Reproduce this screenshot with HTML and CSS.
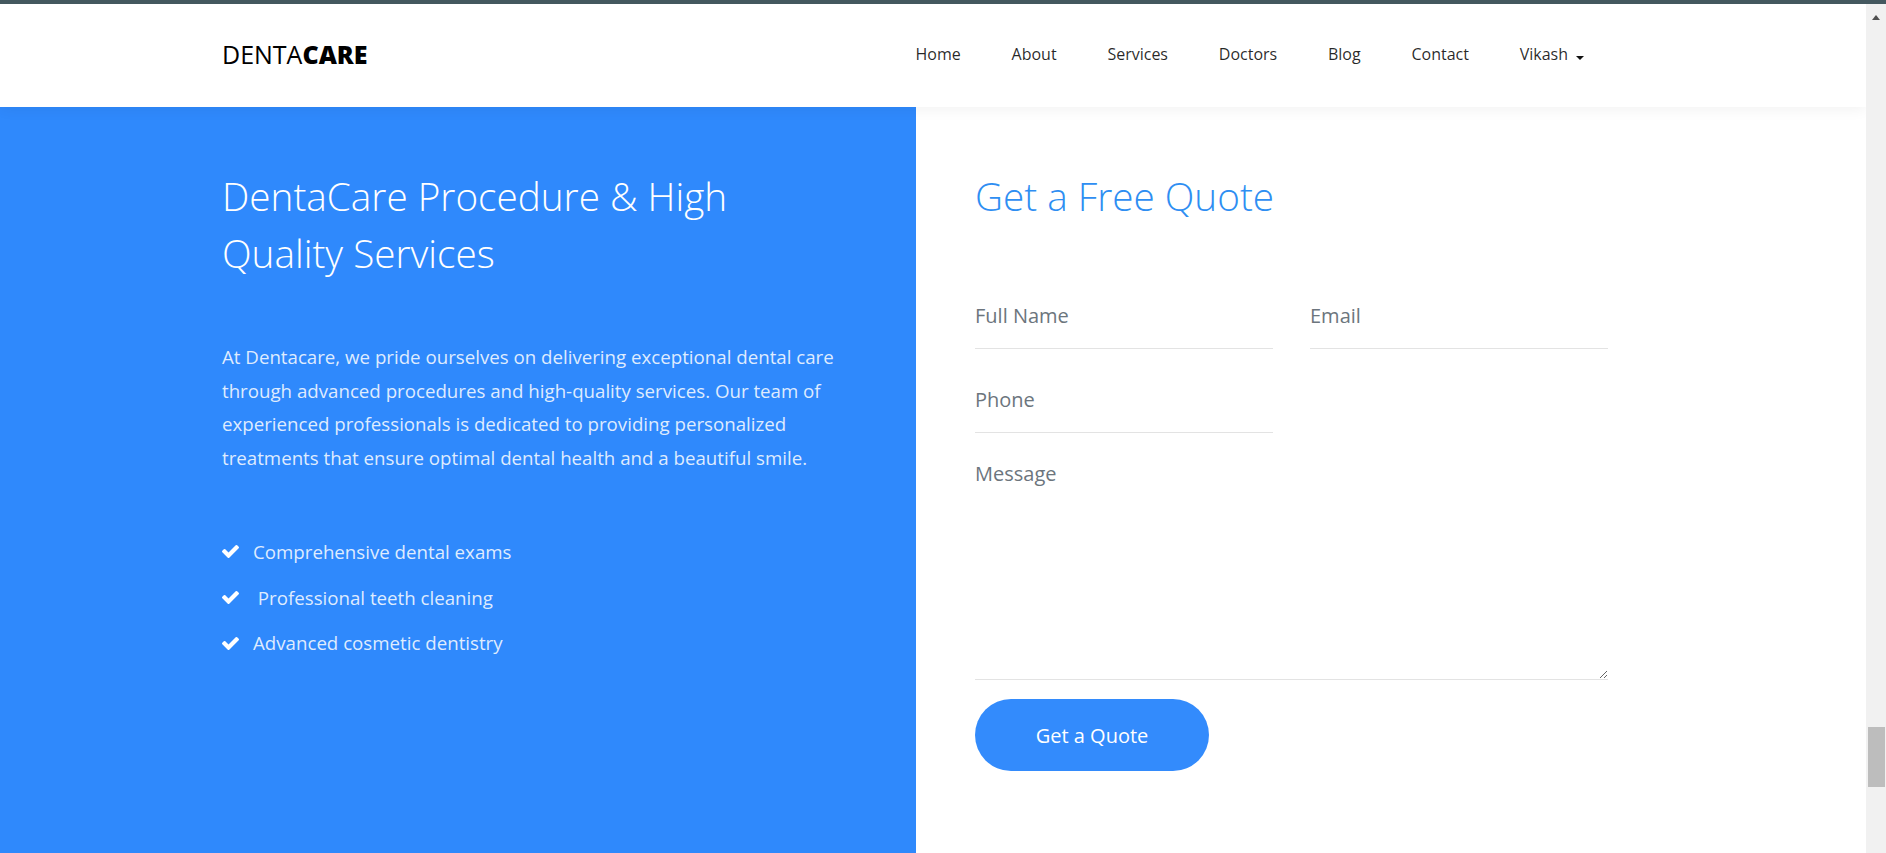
FILE: index.html
```html
<!DOCTYPE html>
<html lang="en">
<head>
<meta charset="utf-8">
<title>DentaCare</title>
<link rel="stylesheet" href="styles.css">
</head>
<body>
<div class="topbar"></div>
<div class="window">
  <div class="page">
    <header class="navbar">
      <div class="container nav-inner">
        <a class="brand" href="#">DENTA<b>CARE</b></a>
        <ul class="nav">
          <li><a href="#">Home</a></li>
          <li><a href="#">About</a></li>
          <li><a href="#">Services</a></li>
          <li><a href="#">Doctors</a></li>
          <li><a href="#">Blog</a></li>
          <li><a href="#">Contact</a></li>
          <li><a href="#" class="dropdown">Vikash<span class="caret"></span></a></li>
        </ul>
      </div>
    </header>
    <section class="quote">
      <div class="info">
        <h2 class="info-title">DentaCare Procedure &amp; High Quality Services</h2>
        <p class="info-text">At Dentacare, we pride ourselves on delivering exceptional dental care through advanced procedures and high-quality services. Our team of experienced professionals is dedicated to providing personalized treatments that ensure optimal dental health and a beautiful smile.</p>
        <ul class="checks">
          <li><svg class="check" viewBox="121 334 1550 1188"><path d="M1671 566q0 40-28 68l-724 724-136 136q-28 28-68 28t-68-28l-136-136-362-362q-28-28-28-68t28-68l136-136q28-28 68-28t68 28l294 295 656-657q28-28 68-28t68 28l136 136q28 28 28 68z"/></svg><span>Comprehensive dental exams</span></li>
          <li><svg class="check" viewBox="121 334 1550 1188"><path d="M1671 566q0 40-28 68l-724 724-136 136q-28 28-68 28t-68-28l-136-136-362-362q-28-28-28-68t28-68l136-136q28-28 68-28t68 28l294 295 656-657q28-28 68-28t68 28l136 136q28 28 28 68z"/></svg><span>&nbsp;Professional teeth cleaning</span></li>
          <li><svg class="check" viewBox="121 334 1550 1188"><path d="M1671 566q0 40-28 68l-724 724-136 136q-28 28-68 28t-68-28l-136-136-362-362q-28-28-28-68t28-68l136-136q28-28 68-28t68 28l294 295 656-657q28-28 68-28t68 28l136 136q28 28 28 68z"/></svg><span>Advanced cosmetic dentistry</span></li>
        </ul>
      </div>
      <div class="form-col">
        <h2 class="form-title">Get a Free Quote</h2>
        <form class="form">
          <input class="field" type="text" placeholder="Full Name">
          <input class="field" type="email" placeholder="Email">
          <input class="field" type="text" placeholder="Phone">
          <textarea class="field message" placeholder="Message"></textarea>
          <button class="btn" type="button">Get a Quote</button>
        </form>
      </div>
    </section>
  </div>
  <div class="scrollbar">
    <div class="arrow-up"></div>
    <div class="thumb"></div>
  </div>
</div>
</body>
</html>
```
FILE: styles.css
```css
* { box-sizing: border-box; }
html, body { margin: 0; padding: 0; height: 100%; }
body {
  font-family: "Open Sans", "Liberation Sans", sans-serif;
  overflow: hidden;
  background: #fff;
  display: flex;
  flex-direction: column;
}
.topbar { height: 4px; background: #44585f; flex: none; }
.window { flex: 1; display: flex; min-height: 0; }
.page { width: 1866px; flex: none; display: flex; flex-direction: column; overflow: hidden; }

.navbar {
  height: 103px;
  flex: none;
  background: #fff;
  position: relative;
  z-index: 2;
  box-shadow: 0 2px 14px rgba(0,0,0,0.06);
}
.container { width: 1387px; margin-left: 222px; }
.nav-inner { height: 100%; display: flex; align-items: center; justify-content: space-between; padding-bottom: 3px; }
.brand { font-size: 25px; color: #000; text-decoration: none; font-weight: 400; }
.brand b { font-weight: 800; }
.nav { list-style: none; margin: 0; padding: 0; display: flex; }
.nav a { display: block; padding: 0 25.4px; font-size: 16px; color: rgba(0,0,0,0.85); text-decoration: none; line-height: 24px; }
.nav li:last-child a { padding-right: 25px; }
.dropdown { display: flex; align-items: center; }
.caret {
  display: inline-block;
  margin-left: 8px;
  width: 0; height: 0;
  border-top: 4px solid #111;
  border-left: 4px solid transparent;
  border-right: 4px solid transparent;
  margin-top: 1px;
}

.quote { flex: 1; display: flex; }
.info { width: 916px; flex: none; background: #2f89fc; padding: 61px 0 0 222px; color: #fff; }
.info-title { margin: 0 0 58px; font-size: 38.7px; font-weight: 300; line-height: 57px; width: 600px; }
.info-text { margin: 0 0 63px; font-size: 18.7px; line-height: 33.7px; color: rgba(255,255,255,0.85); width: 640px; }
.checks { list-style: none; margin: 0; padding: 0; }
.checks li { display: flex; align-items: center; font-size: 18.7px; line-height: 28px; margin-bottom: 17.7px; color: rgba(255,255,255,0.85); }
.check { width: 17px; height: 13px; fill: #fff; margin-right: 14px; flex: none; }

.form-col { flex: 1; padding: 61px 0 0 59px; }
.form-title { margin: 0 0 60px; font-size: 38.7px; font-weight: 300; line-height: 57px; color: #2e8ef2; }
.form { display: grid; grid-template-columns: 298px 298px; column-gap: 37px; row-gap: 20px; width: 634px; }
.field {
  font-family: inherit;
  font-size: 20px;
  height: 64px;
  border: none;
  border-bottom: 1px solid #e3e3e3;
  padding: 0 0 3px;
  color: #333;
  background: transparent;
  outline: none;
  width: 100%;
}
.field::placeholder { color: #6c757d; opacity: 1; }
.message { grid-column: 1 / 3; height: 227px; padding: 7px 0 0; line-height: 27px; resize: vertical; }
.btn {
  grid-column: 1;
  justify-self: start;
  width: 234px;
  height: 72px;
  margin-top: -1px;
  border: none;
  border-radius: 36px;
  background: #338bfc;
  color: #fff;
  font-family: inherit;
  font-size: 20px;
  cursor: pointer;
}

.scrollbar { width: 20px; flex: none; background: #f1f1f1; display: flex; flex-direction: column; align-items: center; }
.arrow-up {
  margin-top: 11px;
  width: 0; height: 0;
  border-bottom: 5px solid #505050;
  border-left: 4px solid transparent;
  border-right: 4px solid transparent;
}
.thumb { margin-top: 707px; width: 17px; height: 60px; background: #bdbdbd; }
```
